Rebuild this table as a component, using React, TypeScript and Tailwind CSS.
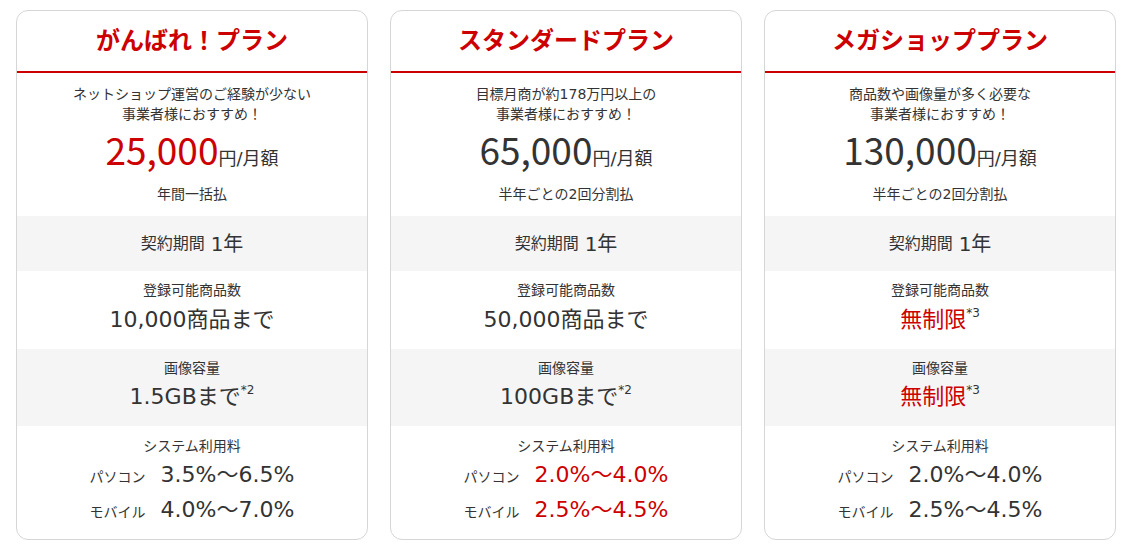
const plans = [
  {
    name: "がんばれ！プラン",
    desc: ["ネットショップ運営のご経験が少ない", "事業者様におすすめ！"],
    price: "25,000",
    priceRed: true,
    payment: "年間一括払",
    items: "10,000商品まで",
    itemsNote: false,
    storage: "1.5GBまで",
    storageNote: "*2",
    unlimited: false,
    pc: "3.5%～6.5%",
    mobile: "4.0%～7.0%",
    feeRed: false,
  },
  {
    name: "スタンダードプラン",
    desc: ["目標月商が約178万円以上の", "事業者様におすすめ！"],
    price: "65,000",
    priceRed: false,
    payment: "半年ごとの2回分割払",
    items: "50,000商品まで",
    itemsNote: false,
    storage: "100GBまで",
    storageNote: "*2",
    unlimited: false,
    pc: "2.0%～4.0%",
    mobile: "2.5%～4.5%",
    feeRed: true,
  },
  {
    name: "メガショッププラン",
    desc: ["商品数や画像量が多く必要な", "事業者様におすすめ！"],
    price: "130,000",
    priceRed: false,
    payment: "半年ごとの2回分割払",
    items: "無制限",
    itemsNote: true,
    storage: "無制限",
    storageNote: "*3",
    unlimited: true,
    pc: "2.0%～4.0%",
    mobile: "2.5%～4.5%",
    feeRed: false,
  },
];

type Plan = (typeof plans)[number];

function FeeRow({ label, value, red }: { label: string; value: string; red: boolean }) {
  return (
    <div className="flex items-baseline h-[35px] leading-[35px]">
      <span className="text-[14px] font-['Noto_Sans_CJK_JP',sans-serif]">{label}</span>
      <span className={`ml-[15px] text-[22px] ${red ? "text-[#cc0000]" : "text-[#333]"}`}>{value}</span>
    </div>
  );
}

function PlanCard({ plan }: { plan: Plan }) {
  const valueColor = plan.unlimited ? "text-[#cc0000]" : "text-[#333]";
  return (
    <div className="flex-1 h-[530px] flex flex-col rounded-[12px] border border-[#d6d6d6] bg-white overflow-hidden">
      {/* Title */}
      <div className="h-[62px] shrink-0 flex items-center justify-center border-b-2 border-[#cc0000]">
        <h2 className="text-[24px] font-bold text-[#cc0000] leading-none">{plan.name}</h2>
      </div>

      {/* Price */}
      <div className="h-[143px] shrink-0 pt-[11px] text-center">
        {plan.desc.map((line) => (
          <p key={line} className="text-[14px] leading-[20px]">{line}</p>
        ))}
        <p className="mt-[2px] leading-[46px]">
          <span
            className={`text-[37px] ${plan.priceRed ? "text-[#cc0000]" : "text-[#333]"}`}
            style={{ fontFamily: '"Noto Sans CJK JP", sans-serif' }}
          >
            {plan.price}
          </span>
          <span className="text-[18px]">円/月額</span>
        </p>
        <p className="mt-[1px] text-[14px] leading-[20px]">{plan.payment}</p>
      </div>

      {/* Contract */}
      <div className="h-[55px] shrink-0 bg-[#f5f5f5] flex items-center justify-center">
        <span className="text-[16px]">契約期間</span>
        <span className="ml-[6px] text-[20px]">1年</span>
      </div>

      {/* Items */}
      <div className="h-[78px] shrink-0 pt-[8px] text-center">
        <p className="text-[14px] leading-[22px]">登録可能商品数</p>
        <p className="mt-[3px] text-[22px] leading-[32px]">
          <span className={valueColor}>{plan.items}</span>
          {plan.itemsNote && <sup className="text-[12px] top-[-0.8em]">*3</sup>}
        </p>
      </div>

      {/* Storage */}
      <div className="h-[77px] shrink-0 pt-[8px] bg-[#f5f5f5] text-center">
        <p className="text-[14px] leading-[22px]">画像容量</p>
        <p className="mt-[2px] text-[22px] leading-[32px]">
          <span className={valueColor}>{plan.storage}</span>
          <sup className="text-[12px] top-[-0.8em]">{plan.storageNote}</sup>
        </p>
      </div>

      {/* Fees */}
      <div className="flex-1 pt-[9px] text-center">
        <p className="text-[14px] leading-[22px]">システム利用料</p>
        <div className="flex flex-col items-center">
          <FeeRow label="パソコン" value={plan.pc} red={plan.feeRed} />
          <FeeRow label="モバイル" value={plan.mobile} red={plan.feeRed} />
        </div>
      </div>
    </div>
  );
}

export default function App() {
  return (
    <div
      className="w-[1132px] h-[547px] bg-white text-[#333] px-4 pt-[10px] flex gap-[22px] items-start"
      style={{ fontFamily: '"DejaVu Sans", "Noto Sans CJK JP", sans-serif' }}
    >
      {plans.map((p) => (
        <PlanCard key={p.name} plan={p} />
      ))}
    </div>
  );
}
